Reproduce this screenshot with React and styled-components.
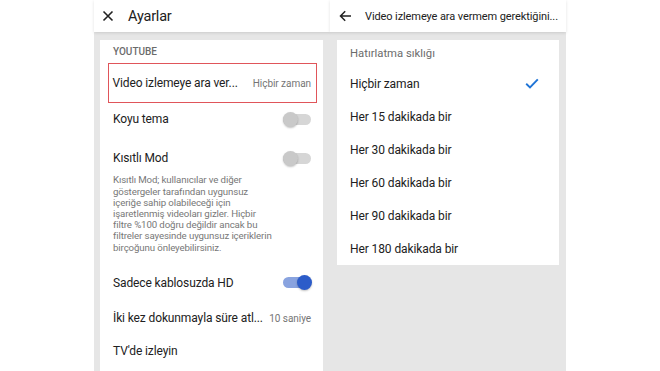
import React from "react";
import styled, { createGlobalStyle } from "styled-components";

const Global = createGlobalStyle`
  html, body { margin: 0; padding: 0; background: #fff; }
  body { font-family: Roboto, "Noto Sans", "Liberation Sans", sans-serif; }
  * { box-sizing: border-box; }
`;

const Page = styled.div`
  width: 660px;
  height: 371px;
  overflow: hidden;
  display: flex;
  padding-left: 94px;
  background: #fff;
`;

const Phone = styled.div`
  width: 236px;
  height: 371px;
  display: flex;
  flex-direction: column;
`;

const Header = styled.div`
  height: 32px;
  flex: none;
  display: flex;
  align-items: center;
  background: #fff;
  padding-left: ${(p) => p.$pl}px;
  gap: ${(p) => p.$gap}px;
  position: relative;
  z-index: 1;
  box-shadow: 0 1px 3px rgba(0, 0, 0, 0.12);
  svg { flex: none; }
`;

const HeaderTitle = styled.div`
  font-size: ${(p) => p.$size}px;
  letter-spacing: ${(p) => p.$ls}px;
  color: #212121;
  white-space: nowrap;
`;

const Body = styled.div`
  flex: 1;
  background: #e6e6e6;
  padding: 8px 7px 0 ${(p) => p.$pl}px;
  display: flex;
  flex-direction: column;
  align-items: stretch;
`;

const Card = styled.div`
  background: #fff;
  display: flex;
  flex-direction: column;
  ${(p) => (p.$fill ? "flex: 1;" : "")}
`;

const SectionLabel = styled.div`
  height: ${(p) => p.$h}px;
  display: flex;
  align-items: center;
  padding-left: 13px;
  font-size: ${(p) => (p.$upper ? 10 : 11.3)}px;
  color: #6b6b6b;
  font-weight: ${(p) => (p.$upper ? 500 : 400)};
  text-transform: ${(p) => (p.$upper ? "uppercase" : "none")};
`;

const Highlight = styled.div`
  height: 40px;
  margin: 0 6px 0 8px;
  border: 1.5px solid #e0555a;
  display: flex;
  align-items: center;
  justify-content: space-between;
  padding: 0 5px 0 3.5px;
`;

const Row = styled.div`
  height: ${(p) => p.$h}px;
  display: flex;
  align-items: center;
  justify-content: space-between;
  padding: 0 ${(p) => p.$pr ?? 11}px 0 13px;
`;

const RowTitle = styled.div`
  font-size: 12px;
  letter-spacing: -0.12px;
  color: #212121;
  white-space: nowrap;
`;

const RowValue = styled.div`
  font-size: 10px;
  letter-spacing: -0.05px;
  color: #757575;
  white-space: nowrap;
`;

const Block = styled.div`
  padding: 13px 11px 0 13px;
`;

const BlockHead = styled.div`
  height: 20px;
  display: flex;
  align-items: center;
  justify-content: space-between;
`;

const Desc = styled.div`
  margin-top: 6.4px;
  font-size: 9.7px;
  letter-spacing: -0.12px;
  line-height: 11.2px;
  color: #777;
  white-space: nowrap;
`;

const Spacer = styled.div`
  height: 12.4px;
`;

const Track = styled.div`
  position: relative;
  width: 28px;
  height: 11px;
  border-radius: 6px;
  background: ${(p) => (p.$on ? "#89a3df" : "#d6d6d6")};
  margin-right: 1px;
`;

const Knob = styled.div`
  position: absolute;
  top: 50%;
  left: ${(p) => (p.$on ? "14px" : "0px")};
  width: 15px;
  height: 15px;
  margin-top: -7.5px;
  border-radius: 50%;
  background: ${(p) => (p.$on ? "#2c5cc9" : "#c9c9c9")};
  box-shadow: 0 1px 2px rgba(0, 0, 0, 0.25);
`;

const Option = styled.div`
  height: 33px;
  display: flex;
  align-items: center;
  justify-content: space-between;
  padding: 0 20px 0 13px;
  font-size: 12px;
  letter-spacing: -0.1px;
  color: #212121;
`;

const Toggle = ({ on }) => (
  <Track $on={on}>
    <Knob $on={on} />
  </Track>
);

const CloseIcon = () => (
  <svg width="12" height="12" viewBox="0 0 12 12">
    <path d="M1.5 1.5 L10.5 10.5 M10.5 1.5 L1.5 10.5" stroke="#222" strokeWidth="1.6" fill="none" />
  </svg>
);

const BackIcon = () => (
  <svg width="13" height="12" viewBox="0 0 13 12">
    <path d="M12 6 H1.8 M6.2 1.3 L1.5 6 L6.2 10.7" stroke="#222" strokeWidth="1.5" fill="none" />
  </svg>
);

const Check = () => (
  <svg width="14" height="11" viewBox="0 0 14 11">
    <path d="M1.2 5.8 L5 9.4 L12.8 1.4" stroke="#1f74d6" strokeWidth="1.9" fill="none" />
  </svg>
);

const options = [
  "Hiçbir zaman",
  "Her 15 dakikada bir",
  "Her 30 dakikada bir",
  "Her 60 dakikada bir",
  "Her 90 dakikada bir",
  "Her 180 dakikada bir",
];

const descLines = [
  "Kısıtlı Mod; kullanıcılar ve diğer",
  "göstergeler tarafından uygunsuz",
  "içeriğe sahip olabileceği için",
  "işaretlenmiş videoları gizler. Hiçbir",
  "filtre %100 doğru değildir ancak bu",
  "filtreler sayesinde uygunsuz içeriklerin",
  "birçoğunu önleyebilirsiniz.",
];

export default function App() {
  return (
    <>
      <Global />
      <Page>
        <Phone>
          <Header $pl={8} $gap={14}>
            <CloseIcon />
            <HeaderTitle $size={14.5} $ls={-0.2}>Ayarlar</HeaderTitle>
          </Header>
          <Body $pl={6}>
            <Card $fill>
              <SectionLabel $h={23} $upper>YouTube</SectionLabel>
              <Highlight>
                <RowTitle>Video izlemeye ara ver...</RowTitle>
                <RowValue>Hiçbir zaman</RowValue>
              </Highlight>
              <Row $h={32}>
                <RowTitle>Koyu tema</RowTitle>
                <Toggle />
              </Row>
              <Block>
                <BlockHead>
                  <RowTitle>Kısıtlı Mod</RowTitle>
                  <Toggle />
                </BlockHead>
                <Desc>
                  {descLines.map((l) => (
                    <div key={l}>{l}</div>
                  ))}
                </Desc>
              </Block>
              <Spacer />
              <Row $h={35}>
                <RowTitle>Sadece kablosuzda HD</RowTitle>
                <Toggle on />
              </Row>
              <Row $h={36} $pr={12}>
                <RowTitle>İki kez dokunmayla süre atl...</RowTitle>
                <RowValue>10 saniye</RowValue>
              </Row>
              <Row $h={30}>
                <RowTitle>TV'de izleyin</RowTitle>
              </Row>
            </Card>
          </Body>
        </Phone>
        <Phone>
          <Header $pl={9} $gap={13}>
            <BackIcon />
            <HeaderTitle $size={11} $ls={-0.1}>Video izlemeye ara vermem gerektiğini...</HeaderTitle>
          </Header>
          <Body $pl={7}>
            <Card>
              <SectionLabel $h={27}>Hatırlatma sıklığı</SectionLabel>
              {options.map((o, i) => (
                <Option key={o}>
                  <span>{o}</span>
                  {i === 0 && <Check />}
                </Option>
              ))}
            </Card>
          </Body>
        </Phone>
      </Page>
    </>
  );
}
